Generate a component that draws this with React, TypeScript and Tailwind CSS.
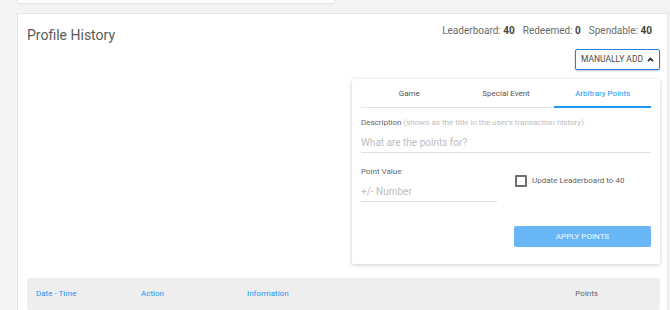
import React, { useState } from "react";

const tabs = ["Game", "Special Event", "Arbitrary Points"];

export default function App() {
  const [activeTab, setActiveTab] = useState(2);
  const [checked, setChecked] = useState(false);

  return (
    <div className="h-[310px] w-[670px] overflow-hidden bg-[#f3f3f3] font-['Roboto',sans-serif]">
      <div className="ml-[17px] h-[4px] w-[318px] border-x border-b border-[#e4e4e4] bg-white" />

      <div className="ml-[17px] mt-[9px] w-[651px] border border-[#e6e6e6] bg-white pl-[9px] pr-[7px] pt-[11px] pb-[40px]">
        <div className="flex items-start justify-between">
          <h2 className="text-[14px] leading-[20px] text-[#5a5a5a]">Profile History</h2>
          <div className="mr-[8px] mt-[-2px] flex gap-[8px] text-[10px] leading-[16px] text-[#6b6b6b]">
            <span>
              Leaderboard: <b className="font-bold text-[#444]">40</b>
            </span>
            <span>
              Redeemed: <b className="font-bold text-[#444]">0</b>
            </span>
            <span>
              Spendable: <b className="font-bold text-[#444]">40</b>
            </span>
          </div>
        </div>

        <div className="mt-[4px] flex justify-end">
          <button className="flex h-[21px] w-[85px] items-center justify-center gap-[4px] rounded-[2px] border border-[#2a7fdc] bg-white text-[8.5px] uppercase text-[#4a4a4a] shadow-[0_1px_2px_rgba(0,0,0,0.25)]">
            Manually Add
            <svg width="7" height="5" viewBox="0 0 8 6">
              <path d="M1 5 L4 2 L7 5" fill="none" stroke="#333" strokeWidth="2.2" />
            </svg>
          </button>
        </div>

        <div className="ml-auto mt-[9px] w-[308px] rounded-[2px] bg-white px-[9px] pt-[2px] pb-[17px] shadow-[0_1px_4px_rgba(0,0,0,0.2)]">
          <div className="flex border-b border-[#e3e3e3]">
            {tabs.map((t, i) => (
              <button
                key={t}
                onClick={() => setActiveTab(i)}
                className={
                  i === activeTab
                    ? "-mb-px h-[27px] flex-1 border-b-2 border-[#2196f3] text-[8px] text-[#2196f3]"
                    : "-mb-px h-[27px] flex-1 border-b-2 border-transparent text-[8px] text-[#555]"
                }
              >
                {t}
              </button>
            ))}
          </div>

          <div className="mt-[9px] text-[8px] leading-[12px] text-[#666]">
            Description <span className="text-[#bdbdbd]">(shows as the title in the user's transaction history)</span>
          </div>
          <input
            placeholder="What are the points for?"
            className="mt-[2px] h-[20px] w-full border-b border-[#e0e0e0] text-[10px] text-[#555] outline-none placeholder:text-[#bdbdbd]"
          />

          <div className="mt-[13px] flex items-start">
            <div className="w-[136px]">
              <div className="text-[8px] leading-[12px] text-[#666]">Point Value</div>
              <input
                placeholder="+/- Number"
                className="h-[20px] w-full border-b border-[#e0e0e0] text-[10px] text-[#555] outline-none placeholder:text-[#bdbdbd]"
              />
            </div>
            <label className="ml-[18px] mt-[9px] flex items-center gap-[5px] text-[8px] text-[#666]">
              <span
                onClick={() => setChecked(!checked)}
                className={
                  checked
                    ? "h-[12px] w-[12px] rounded-[1px] border-2 border-[#2196f3] bg-[#2196f3]"
                    : "h-[12px] w-[12px] rounded-[1px] border-2 border-[#6e6e6e]"
                }
              />
              Update Leaderboard to 40
            </label>
          </div>

          <div className="mt-[24px] flex justify-end">
            <button className="h-[21px] w-[137px] rounded-[2px] bg-[#68b6f6] text-[8px] uppercase text-white/90">
              Apply Points
            </button>
          </div>
        </div>

        <div className="mt-[14px] flex h-[32px] items-center rounded-[2px] bg-[#eeeeee] px-[9px] text-[8px] text-[#2196f3]">
          <span className="w-[105px]">Date - Time</span>
          <span className="w-[106px]">Action</span>
          <span className="flex-1">Information</span>
          <span className="mr-[53px] text-[#666]">Points</span>
        </div>
      </div>
    </div>
  );
}
